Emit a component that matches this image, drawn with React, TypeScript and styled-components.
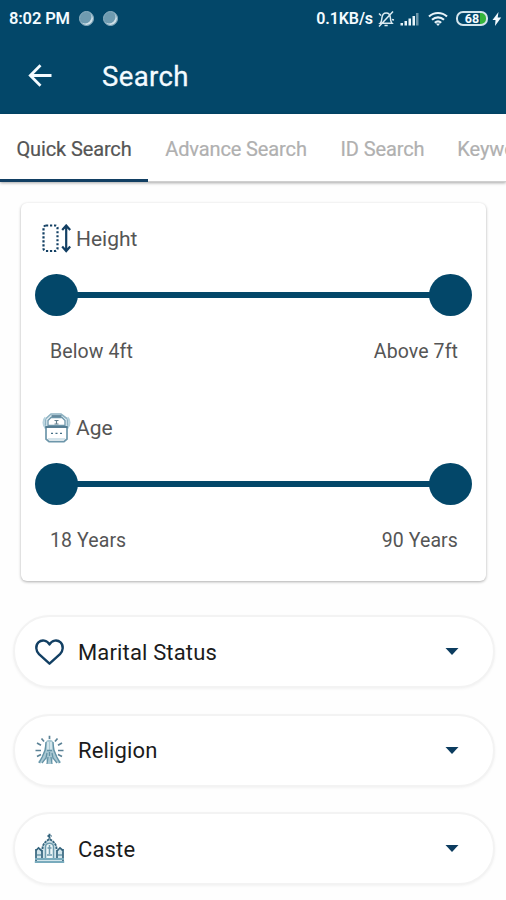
import React from "react";
import styled, { createGlobalStyle } from "styled-components";

const NAVY = "#034769";
const INK = "#123f63";

const GlobalStyle = createGlobalStyle`
  *, *::before, *::after { box-sizing: border-box; }
  body { margin: 0; background: #fefefe; font-family: Roboto, "Liberation Sans", sans-serif; }
  svg { display: block; flex: none; }
`;

const Screen = styled.main`
  width: 506px;
  height: 900px;
  overflow: hidden;
  background: #fefefe;
`;

const Header = styled.header`
  height: 114px;
  background: ${NAVY};
  color: #f4fbff;
`;

const StatusBar = styled.div`
  height: 37px;
  padding: 0 4px 0 9px;
  display: flex;
  align-items: center;
  justify-content: space-between;
`;

const StatusGroup = styled.div<{ $gap: number }>`
  display: flex;
  align-items: center;
  gap: ${(p) => p.$gap}px;
`;

const StatusText = styled.span<{ $size: number; $tracking: number }>`
  margin-top: 1px;
  font-size: ${(p) => p.$size}px;
  font-weight: 600;
  line-height: 20px;
  letter-spacing: ${(p) => p.$tracking}px;
  white-space: nowrap;
`;

const Dot = styled.i`
  width: 15px;
  height: 15px;
  border-radius: 50%;
  background: #6f9bb0;
  border: 1px solid #8fb1c2;
  box-shadow: inset -1.5px -1.5px 0 #cfe0e8;
`;

const AppBar = styled.div`
  height: 77px;
  padding-left: 28px;
  display: flex;
  align-items: center;
  gap: 50px;
`;

const Title = styled.h1`
  margin: 2px 0 0;
  font-size: 27.5px;
  font-weight: 400;
  line-height: 32px;
  letter-spacing: 0.4px;
  -webkit-text-stroke: 0.3px currentColor;
`;

const Tabs = styled.nav`
  height: 68px;
  background: #fff;
  border-bottom: 1px solid #cfcfcf;
  box-shadow: 0 1px 3px rgba(0, 0, 0, 0.35);
`;

const TabStrip = styled.div`
  width: 506px;
  height: 68px;
  display: flex;
  overflow: hidden;
`;

const Tab = styled.a<{ $active?: boolean; $width: number }>`
  flex: 0 0 ${(p) => p.$width}px;
  height: 68px;
  padding-top: 4px;
  display: flex;
  align-items: center;
  justify-content: center;
  font-size: 20px;
  letter-spacing: -0.12px;
  white-space: nowrap;
  color: ${(p) => (p.$active ? "#555" : "#b0b0b0")};
  -webkit-text-stroke: 0.2px currentColor;
  border-bottom: 3px solid ${(p) => (p.$active ? INK : "transparent")};
`;

const Card = styled.section`
  width: 465px;
  height: 378px;
  margin: 21px 0 0 21px;
  padding: 15px 14px 0 14px;
  background: #fff;
  border-radius: 6px;
  box-shadow: 0 1px 3px rgba(0, 0, 0, 0.32);
`;

const RangeField = styled.div`
  height: 189px;
`;

const RangeLabel = styled.div`
  height: 42px;
  padding-left: 6px;
  display: flex;
  align-items: center;
  gap: 5px;
  font-size: 21px;
  line-height: 24px;
  color: #555;
`;

const Slider = styled.div`
  height: 42px;
  margin: 14px 0 0;
  display: flex;
  align-items: center;
`;

const Thumb = styled.span`
  width: 43px;
  height: 42px;
  border-radius: 50%;
  background: ${NAVY};
`;

const Track = styled.span`
  flex: 1;
  height: 6px;
  margin: 0 -2px;
  background: ${NAVY};
`;

const RangeValues = styled.div`
  margin-top: 25px;
  padding: 0 14px 0 15px;
  display: flex;
  justify-content: space-between;
  font-size: 19.5px;
  line-height: 22px;
  letter-spacing: 0.1px;
  color: #555;
`;

const Filters = styled.div`
  margin: 34px 11px 0 13px;
  display: grid;
  grid-auto-rows: 73px;
  row-gap: 25.5px;
`;

const Filter = styled.button`
  padding: 0 34px 0 19px;
  display: flex;
  align-items: center;
  gap: 12px;
  border: 2px solid #f3f3f3;
  border-radius: 37px;
  background: #fff;
  box-shadow: 0 1px 3px rgba(0, 0, 0, 0.05);
  font: 400 22px/26px Roboto, sans-serif;
  color: #1b1b1b;
`;

const FilterName = styled.span`
  flex: 1;
  margin: 2px 0 0 1px;
  text-align: left;
  letter-spacing: 0.15px;
`;

const Battery = styled.div`
  width: 32px;
  height: 15px;
  margin-left: 4px;
  display: flex;
  align-items: center;
  justify-content: center;
  border: 2px solid #d4e5ed;
  border-radius: 7px;
  background: linear-gradient(90deg, transparent 22px, #35b53a 22px);
  font-size: 12.5px;
  font-weight: 700;
  line-height: 11px;
`;

const BackArrow = () => (
  <svg width="24" height="24" viewBox="0 0 24 24" fill="none" stroke="#f4fbff" strokeWidth="2.8">
    <path d="M23.5 11.500H3M12.500 1.300 2.300 11.500l10.200 10.200" />
  </svg>
);

const Muted = () => (
  <svg width="18" height="18" viewBox="0 0 18 18" fill="none" stroke="#dcebf2" strokeWidth="1.5">
    <path d="M3.2 13.2c1.500-1.300 1.500-2.700 1.700-5.200C5.200 4.500 7 3 9.200 3s4 1.500 4.200 5c.1 2.500.3 3.900 1.600 5.200ZM7.500 15.500h3.200M16 1.500 2 16.500M2 3.500l2 2M15 9.500l2 .5" />
  </svg>
);

const Signal = () => (
  <svg width="25" height="14" viewBox="0 0 25 14" fill="#e8f4fa">
    <path d="M1.500 11H4v2.500H1.500ZM5.500 9H8v4.500H5.500ZM9.500 6.500H12v7H9.500ZM13.500 4H16v9.500h-2.500Z" />
    <path fill="#6d96aa" d="M17 1h2.500v12.500H17Z" />
  </svg>
);

const Wifi = () => (
  <svg width="20" height="16" viewBox="0 0 20 16" fill="none" stroke="#e8f4fa" strokeWidth="2.100">
    <path d="M1 5.500c5-4.700 13-4.700 18 0M4 8.800c3.500-3.200 8.500-3.200 12 0M6.800 11.800c2-1.700 4.400-1.700 6.400 0" />
    <path d="m7.800 12.500 2.200 2.500 2.200-2.500Z" fill="#e8f4fa" stroke="none" />
  </svg>
);

const Bolt = () => (
  <svg width="10" height="14" viewBox="0 0 10 14" fill="#f4fbff">
    <path d="M6.500 0 .5 8h3L3 14 9.200 5.500H5.700Z" />
  </svg>
);

const HeightIcon = () => (
  <svg width="30" height="30" viewBox="0 0 30 30" fill="none" stroke={INK}>
    <rect x="2.500" y="1.500" width="14" height="25.500" rx="2.500" strokeWidth="2.200" strokeDasharray="2.200 1.800" />
    <path d="M25.200 2v24.500M21.200 6l4-4.500 4 4.500M21.200 22.500l4 4.500 4-4.500" strokeWidth="2.200" />
  </svg>
);

const AgeIcon = () => (
  <svg width="30" height="30" viewBox="0 0 30 30" fill="none" stroke="#6d96aa">
    <path d="M10 1h10l6.500 5v9H4.500V6Z" fill="#e4f0f5" stroke="#8eb2c2" strokeWidth="1.600" />
    <path d="M4.500 4.500C1.800 7 2 12 4.500 14.500M26.500 4.500c2.700 2.500 2.500 7.500 0 10" stroke="#b7d2dd" strokeWidth="2.200" />
    <path d="M7 12.500V7.500l3-3h11l3 3v5Z" fill="#fff" strokeWidth="1.300" />
    <path d="M5 14h21v12l-3 2.700H8L5 26Z" fill="#fff" strokeWidth="1.700" />
    <path d="M4.500 14h22M10.500 3h10" stroke="#456f86" strokeWidth="1.500" />
    <path d="M13.500 7.500h4M15.500 7v4M13.500 11h4" stroke="#64808e" strokeWidth="1.200" />
    <path d="M10 20.300h2M14.500 20.300h2M19 20.300h2" stroke="#456f86" strokeWidth="1.300" />
    <path d="M7 26h17" stroke="#a8c7d5" />
  </svg>
);

const HeartIcon = () => (
  <svg width="31" height="28" viewBox="0 0 31 28" fill="none" stroke={INK} strokeWidth="2.400" strokeLinejoin="round">
    <path d="M15.500 25.700 5 16.200C1.800 13 1.200 7.500 4.400 4.400 7.600 1.500 13 2 15.500 6.400 18 2 23.400 1.500 26.600 4.400c3.200 3.100 2.600 8.600-.6 11.800Z" />
  </svg>
);

const ReligionIcon = () => (
  <svg width="31" height="31" viewBox="0 0 31 31" fill="none">
    <path
      d="M7.500 3.500 10 6.500M23.500 3.500 21 6.500M3 8l4 2.200M28 8l-4 2.200M1.500 15.500H7M29.500 15.500H24M3 21.500l4-2M28 21.500l-4-2M15.500.8V4"
      stroke="#5b8296"
      strokeWidth="1.700"
    />
    <path d="M12 6.500c1-2.500 6-2.500 7 0l1.500 8 2.500 7 4 5.500-2.500 1.500-5.500-5-1.500 5.500h-4L12 23.500l-5.500 5L4 27l4-5.500 2.500-7Z" fill="#a9c8d3" />
    <path d="m12 7-.8 8-3 7L5 28M19 7l.8 8 3 7 3.200 6M15.500 17v4M13 18l-1 5-4 5M18 18l1 5 4 5M13 15.500h5M14 22l-1 7M17 22l1 7" stroke="#6493a6" strokeWidth="1.300" />
    <path d="M14 7v7.500M17 7v7.500" stroke="#e9f4f7" strokeWidth="1.300" />
  </svg>
);

const CasteIcon = () => (
  <svg width="31" height="31" viewBox="0 0 31 31" fill="none">
    <path d="M2 17h5l3-7 5.500-4L21 10l3 7h5v12H2Z" fill="#d3e5eb" />
    <path d="M15.500.8v5M13.500 3h4M8.500 16c0-5 3-7.500 7-10 4 2.500 7 5 7 10" stroke="#35657e" strokeWidth="1.900" strokeDasharray="2.500 .8" />
    <path d="M2 16v12M8 17v9M23 17v9M29 16v12M1.500 18l3-3 3.500 3M23 18l3-3 3.500 3" stroke="#35657e" strokeWidth="1.700" />
    <path d="M11.500 25V14c0-5 8-5 8 0v11" stroke="#6d9bad" strokeWidth="1.500" fill="#edf6f8" />
    <path d="M15.500 12v9M13.500 15h4M13 22h5M3 22h4M24 22h4" stroke="#6d9bad" strokeWidth="1.500" />
    <path d="M1 26h29M.8 29h29.400" stroke="#79abbd" strokeWidth="2" />
  </svg>
);

const Caret = () => (
  <svg width="14" height="7" viewBox="0 0 14 7" fill="#0c3c5f">
    <path d="M.5 0h13L7 7Z" />
  </svg>
);

const ranges = [
  { name: "Height", icon: <HeightIcon />, from: "Below 4ft", to: "Above 7ft" },
  { name: "Age", icon: <AgeIcon />, from: "18 Years", to: "90 Years" },
];

const filters = [
  { name: "Marital Status", icon: <HeartIcon /> },
  { name: "Religion", icon: <ReligionIcon /> },
  { name: "Caste", icon: <CasteIcon /> },
];

export default function App() {
  return (
    <Screen>
      <GlobalStyle />
      <Header>
        <StatusBar>
          <StatusGroup $gap={9}>
            <StatusText $size={16.5} $tracking={-0.15}>8:02 PM</StatusText>
            <Dot />
            <Dot />
          </StatusGroup>
          <StatusGroup $gap={4}>
            <StatusText $size={16} $tracking={-0.1}>0.1KB/s</StatusText>
            <Muted />
            <Signal />
            <Wifi />
            <Battery>68</Battery>
            <Bolt />
          </StatusGroup>
        </StatusBar>
        <AppBar>
          <BackArrow />
          <Title>Search</Title>
        </AppBar>
      </Header>
      <Tabs>
        <TabStrip>
          <Tab $active $width={148}>Quick Search</Tab>
          <Tab $width={176}>Advance Search</Tab>
          <Tab $width={117}>ID Search</Tab>
          <Tab $width={174}>Keyword Search</Tab>
        </TabStrip>
      </Tabs>
      <Card>
        {ranges.map((r) => (
          <RangeField key={r.name}>
            <RangeLabel>
              {r.icon}
              <span>{r.name}</span>
            </RangeLabel>
            <Slider>
              <Thumb />
              <Track />
              <Thumb />
            </Slider>
            <RangeValues>
              <span>{r.from}</span>
              <span>{r.to}</span>
            </RangeValues>
          </RangeField>
        ))}
      </Card>
      <Filters>
        {filters.map((f) => (
          <Filter key={f.name} type="button">
            {f.icon}
            <FilterName>{f.name}</FilterName>
            <Caret />
          </Filter>
        ))}
      </Filters>
    </Screen>
  );
}
